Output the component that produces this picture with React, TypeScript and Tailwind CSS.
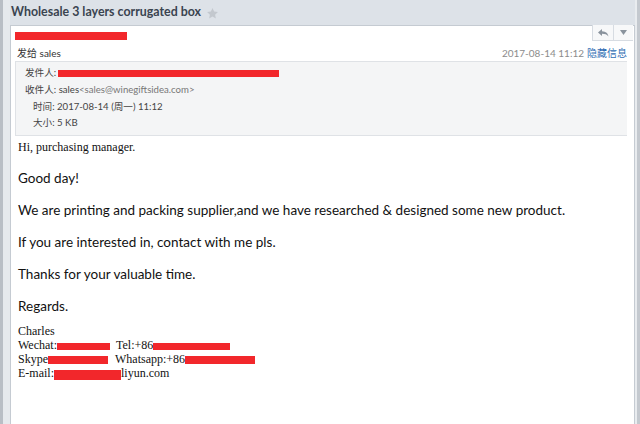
import React from "react";

const Red = ({ w, h = 8, className = "" }: { w: number; h?: number; className?: string }) => (
  <span
    className={`inline-block bg-[#f2272b] align-middle ${className}`}
    style={{ width: w, height: h }}
  />
);

export default function App() {
  const cjk = { fontFamily: 'Lato, "Noto Sans CJK SC", sans-serif' };
  const seg = { fontFamily: 'Lato, "Noto Sans", sans-serif' };
  const serif = { fontFamily: '"Liberation Serif", "Times New Roman", serif' };
  return (
    <div className="w-[640px] h-[424px] bg-[#dde2e8] flex overflow-hidden">
      {/* left edge */}
      <div className="w-[10px] h-full flex">
        <div className="w-[3px] h-full bg-[#b9bec5]" />
        <div className="w-[7px] h-full bg-[#e6e9ed]" />
      </div>
      <div className="flex-1 flex flex-col min-w-0">
        <div className="h-[25px] flex items-center gap-[5px] pl-[1px]">
          <span
            className="text-[12.4px] font-bold text-[#3a4450] leading-none"
            style={cjk}
          >
            Wholesale 3 layers corrugated box
          </span>
          <svg width="13" height="13" viewBox="0 0 24 24" className="mt-[1px]">
            <path
              d="M12 2l3 6.5 7 .8-5.2 4.8 1.4 7L12 17.6 5.8 21.1l1.4-7L2 9.3l7-.8z"
              fill="#c3c8ce"
            />
          </svg>
        </div>
        <div className="flex-1 bg-white border-l border-t border-r border-[#c5cbd2] flex flex-col relative">
          {/* top header */}
          <div className="h-[35px] relative">
            <div className="absolute left-[4px] top-[6px] flex">
              <Red w={112} h={8} />
            </div>
            <div className="absolute right-[1px] top-[-1px] flex h-[16px] border-l border-b border-[#d7dce2]">
              <div className="w-[21px] flex items-center justify-center border-r border-[#d7dce2] bg-[#f7f8f9]">
                <svg width="12" height="10" viewBox="0 0 12 10">
                  <path d="M5 1 L1 4.5 L5 8 V5.8 C8 5.8 10 6.5 11.5 8.5 C11 5.5 9 3.3 5 3.2 Z" fill="#8a939d" />
                </svg>
              </div>
              <div className="w-[19px] flex items-center justify-center bg-[#f7f8f9]">
                <svg width="7" height="5" viewBox="0 0 7 5">
                  <path d="M0 0 H7 L3.5 5 Z" fill="#8a939d" />
                </svg>
              </div>
            </div>
            <div
              className="absolute left-[6px] top-[20px] text-[10px] leading-[14px] text-[#333]"
              style={cjk}
            >
              发给 sales
            </div>
            <div
              className="absolute right-[7px] top-[20px] text-[10px] leading-[14px] flex gap-[3px]"
              style={cjk}
            >
              <span className="text-[#8c8c8c]">2017-08-14 11:12</span>
              <span className="text-[#2f6db3]">隐藏信息</span>
            </div>
          </div>
          {/* info box */}
          <div
            className="ml-[4px] mr-[7px] h-[75px] bg-[#f4f5f6] border-t border-b border-l border-[#dfe2e6] text-[9.6px] text-[#444] flex flex-col"
            style={cjk}
          >
            <div className="h-[17px] mt-[3px] flex items-center pl-[9px]">
              发件人:
              <span className="ml-[2px] flex">
                <Red w={221} h={7} />
              </span>
            </div>
            <div className="h-[17px] flex items-center pl-[9px]">
              收件人: sales<span className="text-[#777]">&lt;sales@winegiftsidea.com&gt;</span>
            </div>
            <div className="h-[16px] flex items-center pl-[17px]">时间: 2017-08-14 (周一) 11:12</div>
            <div className="h-[17px] flex items-center pl-[17px]">大小: 5 KB</div>
          </div>
          {/* body */}
          <div className="pl-[7px] text-[#111]">
            <div className="mt-[3px] text-[12px] leading-[16px]" style={serif}>
              Hi, purchasing manager.
            </div>
            <div className="text-[13.5px] leading-[20px]" style={seg}>
              <p className="mt-[13px]">Good day!</p>
              <p className="mt-[12px]">
                We are printing and packing supplier,and we have researched &amp; designed some new product.
              </p>
              <p className="mt-[12px]">If you are interested in, contact with me pls.</p>
              <p className="mt-[12px]">Thanks for your valuable time.</p>
              <p className="mt-[12px]">Regards.</p>
            </div>
            <div className="mt-[8px] text-[12px] leading-[14px]" style={serif}>
              <div>Charles</div>
              <div className="whitespace-nowrap">
                Wechat:<Red w={53} h={7} />
                <span className="ml-[6px]">Tel:+86</span>
                <Red w={77} h={7} />
              </div>
              <div className="whitespace-nowrap">
                Skype<Red w={60} h={8} />
                <span className="ml-[7px]">Whatsapp:+86</span>
                <Red w={70} h={8} />
              </div>
              <div className="whitespace-nowrap">
                E-mail:<Red w={67} h={10} className="mt-[2px]" />
                liyun.com
              </div>
            </div>
          </div>
        </div>
      </div>
      {/* right edge */}
      <div className="w-[5px] h-full flex">
        <div className="w-[2px] h-full bg-[#e9ecef]" />
        <div className="w-[3px] h-full bg-[#c4c9cf]" />
      </div>
    </div>
  );
}
